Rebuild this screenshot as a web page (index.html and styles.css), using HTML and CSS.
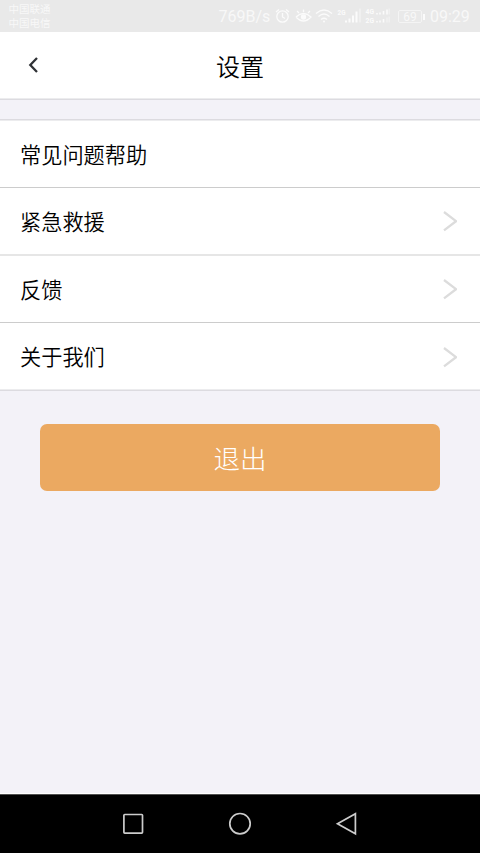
FILE: index.html
```html
<!DOCTYPE html>
<html lang="zh-CN">
<head>
<meta charset="utf-8">
<title>设置</title>
<link rel="stylesheet" href="styles.css">
</head>
<body>
<div class="status">
  <div class="carriers"><span>中国联通</span><span>中国电信</span></div>
  <span class="speed">769B/s</span>
  <svg class="status-icons" width="120" height="32" viewBox="0 0 120 32" fill="none" stroke="#fbfbfb" stroke-width="1.3">
    <circle cx="12.5" cy="16.5" r="5.7"/><path d="M12.5 13v4l2.5 1.5M6 12l3-2.5M19 12l-3-2.5"/>
    <path d="M26 17q7.500-7 15 0q-7.500 8-15 0M29 13l-2-2M33.500 12V9.500M38 13l2-2"/><circle cx="33.500" cy="17" r="2" fill="#fbfbfb"/>
    <path d="M46 13.500q8-7 16 0M48.500 16.500q5.500-5 11 0M51 19.500q3-2.500 6 0"/><circle cx="54" cy="21.500" r="1" fill="#fbfbfb" stroke="none"/>
    <path stroke-width="2" d="M76 22.500v-2M79.500 22.500v-4M83 22.500v-7M86.500 22.500v-11"/><path stroke-width="2" stroke="#f0f0f0" d="M90 22.500v-14"/>
    <path stroke-width="1.600" d="M107 14.500v-1.500M110 14.500v-2M113.500 14.500v-3.500M117 14.500v-5M107 22.500v-1.500M110 22.500v-2M113.500 22.500v-3.500"/><path stroke-width="1.600" stroke="#f0f0f0" d="M119.200 14.500v-6M117 22.500v-5M119.200 22.500v-6"/>
    <g class="net"><text x="67.500" y="15" textLength="8" lengthAdjust="spacingAndGlyphs">2G</text><text x="95.500" y="14" textLength="8.500" lengthAdjust="spacingAndGlyphs">4G</text><text x="95.500" y="23" textLength="8.500" lengthAdjust="spacingAndGlyphs">2G</text></g>
  </svg>
  <div class="battery">69</div>
  <span class="clock">09:29</span>
</div>
<header class="header">
  <svg class="back" width="12" height="18" viewBox="0 0 12 18"><path d="M10 2L3.300 9l6.700 7" fill="none" stroke="#303236" stroke-width="2.300"/></svg>
  <h1>设置</h1>
</header>
<main class="content">
  <ul class="list">
    <li class="row first">常见问题帮助</li>
    <li class="row soft"><span>紧急救援</span><svg class="arrow" viewBox="0 0 14 22"><path d="M1 2l12 9.200L1 20.400"/></svg></li>
    <li class="row"><span>反馈</span><svg class="arrow" viewBox="0 0 14 22"><path d="M1 2l12 9.200L1 20.400"/></svg></li>
    <li class="row last"><span>关于我们</span><svg class="arrow" viewBox="0 0 14 22"><path d="M1 2l12 9.200L1 20.400"/></svg></li>
  </ul>
  <button class="logout">退出</button>
</main>
<nav class="nav">
  <svg width="24" height="24" viewBox="0 0 24 24"><rect x="2.900" y="2.500" width="18.600" height="18.600" rx=".8"/></svg>
  <svg width="24" height="24" viewBox="0 0 24 24"><circle cx="12" cy="11.700" r="10.200"/></svg>
  <svg width="24" height="24" viewBox="0 0 24 24"><path d="M2.500 11.700L20.400 1.700v20z"/></svg>
</nav>
</body>
</html>
```
FILE: styles.css
```css
* { box-sizing: border-box; }
body {
  margin: 0;
  height: 853px;
  display: flex;
  flex-direction: column;
  overflow: hidden;
  background: #f3f2f8;
  color: #000;
  font-family: "Noto Sans CJK SC", sans-serif;
}
.status {
  flex: none;
  height: 32px;
  display: flex;
  align-items: center;
  background: #e9e9e9;
  color: #f8f8f8;
  font-family: Roboto, "Noto Sans CJK SC", sans-serif;
}
.carriers {
  width: 210px;
  padding: 2px 0 0 8.5px;
  display: flex;
  flex-direction: column;
  font-size: 10.5px;
  line-height: 14.5px;
  color: #f8f8f8;
}
.speed {
  width: 60px;
  padding-left: 8.5px;
  font-size: 16px;
  white-space: nowrap;
}
.status-icons { flex: none; }
.net text {
  fill: #fbfbfb;
  stroke: none;
  font: 700 7px "Roboto", sans-serif;
}
.battery {
  position: relative;
  width: 24px;
  height: 13px;
  margin-left: 8px;
  border: 1px solid #f4f4f4;
  border-radius: 2px;
  font-size: 12px;
  line-height: 12px;
  text-align: center;
}
.battery::after {
  content: "";
  position: absolute;
  right: -4px;
  top: 3px;
  width: 2px;
  height: 6px;
  background: #fbfbfb;
}
.clock {
  margin-left: 8px;
  font-size: 16px;
}
.header {
  flex: none;
  height: 68px;
  display: grid;
  grid-template-columns: 60px 1fr 60px;
  align-items: center;
  background: #fff;
  border-bottom: 1px solid #dcdbe0;
  box-shadow: inset 0 -1px #ececee;
}
.back { margin: 0 0 2px 27px; }
.header h1 {
  margin: 0;
  text-align: center;
  font-size: 24px;
  font-weight: 350;
  line-height: 34px;
}
.content { flex: 1; border-bottom: 1px solid #fff; }
.list {
  margin: 19px 0 0;
  padding: 0;
  list-style: none;
  background: #fff;
  border-top: 1px solid #dcdbe0;
  box-shadow: inset 0 1px #ececee;
}
.row {
  height: 68px;
  padding: 0 23px 0 20px;
  display: flex;
  align-items: center;
  justify-content: space-between;
  border-bottom: 1px solid #ccc;
  font-size: 21.2px;
  font-weight: 350;
}
.row span { padding-bottom: 2px; }
.row.soft { border-bottom: 2px solid #e6e6e6; }
.row.last { border-bottom: 1px solid #dcdbe0; box-shadow: inset 0 -1px #ececee; }
.row:nth-child(3) { height: 67px; }
.arrow {
  width: 14px;
  height: 22px;
  fill: none;
  stroke: #dcdcdc;
  stroke-width: 2.3;
}
.logout {
  display: block;
  width: 400px;
  height: 66.5px;
  margin: 33px auto 0;
  padding: 0;
  border: 0;
  border-radius: 7px;
  background: #eba961;
  color: #fff;
  font: 300 26.5px "Noto Sans CJK SC", sans-serif;
}
.nav {
  flex: none;
  height: 59px;
  padding: 0 121px;
  display: flex;
  align-items: center;
  justify-content: space-between;
  background: #000;
  border-top: 1px solid #505050;
}
.nav svg { fill: none; stroke: #ccc; stroke-width: 1.700; }
```
